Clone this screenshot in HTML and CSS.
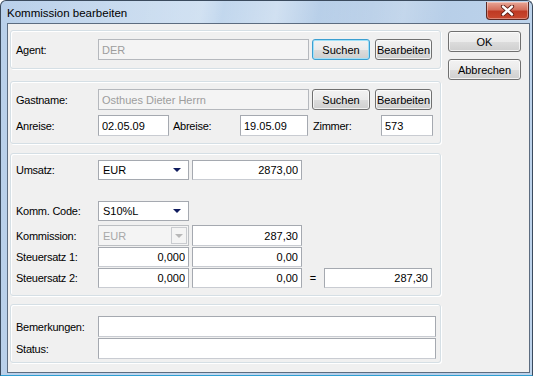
FILE: index.html
```html
<!DOCTYPE html>
<html>
	<head>
		<meta charset="UTF-8">
		<title>Kommission bearbeiten</title>
		<link rel="stylesheet" href="styles.css">
	</head>
	<body>
		<div class="window">
			<div class="titlebar">
				<span class="title">Kommission bearbeiten</span>
				<div class="close">
					<svg width="17" height="11" viewBox="0 0 17 11">
						<path d="M4 1.5 L13 9.5 M13 1.5 L4 9.5" stroke="#5a1a12" stroke-width="4.2" stroke-linecap="round"/>
						<path d="M4 1.5 L13 9.5 M13 1.5 L4 9.5" stroke="#fff" stroke-width="2.4" stroke-linecap="round"/>
					</svg>
				</div>
			</div>
			<div class="client">
				<div class="groups">
					<div class="group g-agent">
						<div class="row">
							<label class="lbl">Agent:</label>
							<input class="field w-name" type="text" value="DER" disabled>
							<button class="btn btn-search focus">Suchen</button>
							<button class="btn btn-edit">Bearbeiten</button>
						</div>
					</div>

					<div class="group g-guest">
						<div class="row">
							<label class="lbl">Gastname:</label>
							<input class="field w-name" type="text" value="Osthues Dieter Herrn" disabled>
							<button class="btn btn-search">Suchen</button>
							<button class="btn btn-edit">Bearbeiten</button>
						</div>
						<div class="row row-dates">
							<label class="lbl">Anreise:</label>
							<input class="field w-date" type="text" value="02.05.09">
							<label class="lbl lbl-abreise">Abreise:</label>
							<input class="field w-date2" type="text" value="19.05.09">
							<label class="lbl lbl-zimmer">Zimmer:</label>
							<input class="field w-room" type="text" value="573">
						</div>
					</div>

					<div class="group g-amount">
						<div class="row r-umsatz">
							<label class="lbl">Umsatz:</label>
							<div class="combo"><span>EUR</span><i class="arrow"></i></div>
							<input class="field w-val num" type="text" value="2873,00">
						</div>
						<div class="row r-code">
							<label class="lbl">Komm. Code:</label>
							<div class="combo"><span>S10%L</span><i class="arrow"></i></div>
						</div>
						<div class="row r-komm">
							<label class="lbl">Kommission:</label>
							<div class="combo disabled"><span>EUR</span><i class="drop"><i class="arrow"></i></i></div>
							<input class="field w-val num" type="text" value="287,30">
						</div>
						<div class="row r-tax">
							<label class="lbl">Steuersatz 1:</label>
							<input class="field w-rate num" type="text" value="0,000">
							<input class="field w-val num" type="text" value="0,00">
						</div>
						<div class="row r-tax">
							<label class="lbl">Steuersatz 2:</label>
							<input class="field w-rate num" type="text" value="0,000">
							<input class="field w-val num" type="text" value="0,00">
							<span class="eq">=</span>
							<input class="field w-total num" type="text" value="287,30">
						</div>
					</div>

					<div class="group g-notes">
						<div class="row">
							<label class="lbl">Bemerkungen:</label>
							<input class="field w-note" type="text" value="">
						</div>
						<div class="row r-status">
							<label class="lbl">Status:</label>
							<input class="field w-note" type="text" value="">
						</div>
					</div>
				</div>

				<div class="actions">
					<button class="btn btn-side">OK</button>
					<button class="btn btn-side">Abbrechen</button>
				</div>
			</div>
		</div>
	</body>
</html>
```

FILE: styles.css
```css
body{
	margin: 0;
	font-family: "Liberation Sans", Arial, sans-serif;
	font-size: 11px;
	color: #000;
}
.window{
	width: 533px;
	height: 376px;
	box-sizing: border-box;
	display: flex;
	flex-direction: column;
	background: linear-gradient(90deg, #b9d0ea, #c3d8ee 40%, #b3cbe6 70%, #bdd3eb);
	border: 1px solid #3b4b5e;
	border-bottom-color: #2e9fd3;
	border-radius: 6px 6px 0 0;
	padding: 0 2px 2px 6px;
}
.titlebar{
	height: 22px;
	display: flex;
	align-items: center;
	justify-content: space-between;
	background: linear-gradient(100deg, rgba(255,255,255,0) 0%, rgba(255,255,255,.25) 38%, rgba(255,255,255,0) 42%, rgba(255,255,255,.3) 52%, rgba(255,255,255,0) 60%, rgba(255,255,255,.2) 76%, rgba(255,255,255,0) 84%);
	margin-left: -6px;
	padding-left: 6px;
}
.title{
	font-size: 11.5px;
	color: #000;
	padding-top: 1px;
}
.close{
	width: 43px;
	height: 18px;
	margin-top: -3px;
	margin-right: 1px;
	box-sizing: border-box;
	border: 1px solid #5c2a25;
	border-top: none;
	border-radius: 0 0 4px 4px;
	background: linear-gradient(#e9a797, #d4705d 45%, #bf3a24 55%, #c9492f);
	display: flex;
	align-items: center;
	justify-content: center;
	box-shadow: inset 0 0 0 1px rgba(255,255,255,.35);
}
.client{
	flex: 1;
	display: flex;
	align-items: flex-start;
	background: #f0f0f0;
	border: 1px solid #5c6c80;
	padding: 6px 0 0 2px;
}
.groups{
	width: 431px;
}
.group{
	box-sizing: border-box;
	border: 1px solid #d5dfe5;
	border-radius: 3px;
	box-shadow: inset 1px 1px 0 #fff, 1px 1px 0 #fff;
	padding-left: 5px;
}
.g-agent{
	height: 39px;
	padding-top: 8px;
}
.g-guest{
	height: 63px;
	margin-top: 12px;
	padding-top: 7px;
}
.g-amount{
	height: 143px;
	margin-top: 9px;
	padding-top: 6px;
}
.g-notes{
	height: 59px;
	margin-top: 8px;
	padding-top: 11px;
}
.row{
	display: flex;
	align-items: center;
	height: 21px;
}
.row-dates{
	margin-top: 5px;
}
.r-umsatz{
	height: 20px;
}
.r-code{
	height: 20px;
	margin-top: 21px;
}
.r-komm{
	margin-top: 4px;
}
.r-tax{
	height: 20px;
	margin-top: 1px;
}
.r-status{
	margin-top: 1px;
}
.lbl{
	width: 82px;
	flex: none;
	letter-spacing: -0.25px;
}
.lbl-abreise{
	width: 67px;
	margin-left: 4px;
}
.lbl-zimmer{
	width: 68px;
	margin-left: 5px;
}
.field{
	box-sizing: border-box;
	height: 100%;
	margin: 0;
	padding: 0 3px;
	border: 1px solid #a5a9b0;
	border-bottom-color: #c9ccd2;
	background: #fff;
	font: inherit;
	color: #000;
	outline: none;
}
.field:disabled{
	background: #f4f4f4;
	color: #9d9d9d;
	border-color: #b5b8bd;
}
.num{
	text-align: right;
}
.w-name{ width: 211px; }
.w-date{ width: 71px; }
.w-date2{ width: 68px; }
.w-room{ width: 52px; }
.w-val{ width: 110px; margin-left: 3px; }
.w-rate{ width: 91px; }
.w-total{ width: 108px; }
.w-note{ width: 338px; }
.eq{
	width: 22px;
	text-align: center;
}
.combo{
	box-sizing: border-box;
	width: 91px;
	height: 100%;
	border: 1px solid #a5a9b0;
	background: #fff;
	display: flex;
	align-items: center;
	justify-content: space-between;
	padding: 0 7px 0 4px;
}
.arrow{
	display: block;
	width: 0;
	height: 0;
	border-left: 4px solid transparent;
	border-right: 4px solid transparent;
	border-top: 4px solid #101c5e;
}
.combo.disabled{
	background: #f4f4f4;
	color: #a8a8a8;
	border-color: #bcbfc3;
	padding-right: 1px;
}
.drop{
	box-sizing: border-box;
	width: 16px;
	height: 17px;
	border: 1px solid #c9cbcf;
	background: #f4f4f4;
	display: flex;
	align-items: center;
	justify-content: center;
}
.drop .arrow{
	border-top-color: #b8b8b8;
}
.btn{
	box-sizing: border-box;
	height: 21px;
	margin: 0;
	padding: 0;
	font: inherit;
	color: #000;
	border: 1px solid #707070;
	border-radius: 3px;
	background: linear-gradient(#f2f2f2, #ebebeb 50%, #dddddd 51%, #cfcfcf);
	box-shadow: inset 0 0 0 1px rgba(255,255,255,.7);
}
.btn-search{
	width: 58px;
	margin-left: 3px;
}
.btn-edit{
	width: 57px;
	margin-left: 5px;
}
.focus{
	border-color: #3c9fd1;
	box-shadow: inset 0 0 0 1px #9fe0f8;
}
.actions{
	margin-left: 7px;
	margin-top: 1px;
	display: flex;
	flex-direction: column;
	gap: 7px;
}
.btn-side{
	width: 73px;
}
```
